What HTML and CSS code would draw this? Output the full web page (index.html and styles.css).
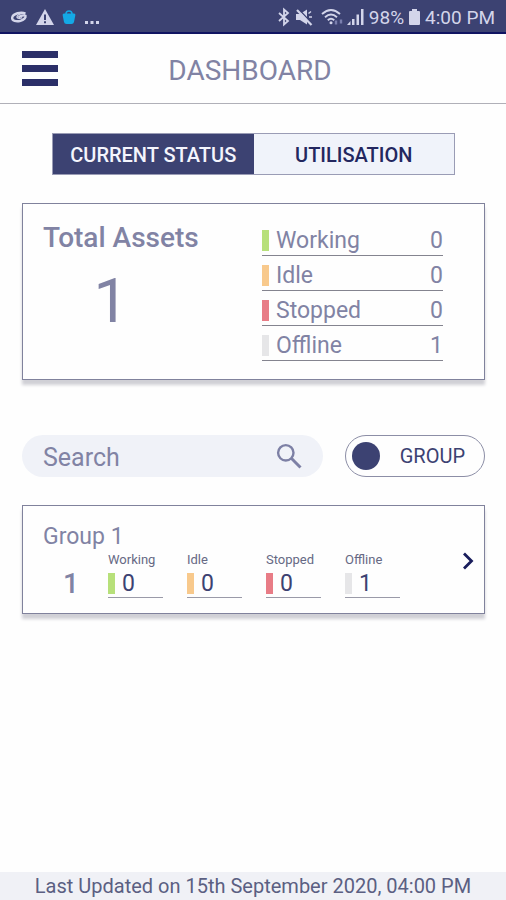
FILE: index.html
```html
<!DOCTYPE html>
<html lang="en">
<head>
<meta charset="utf-8">
<meta name="viewport" content="width=device-width, initial-scale=1">
<title>Dashboard</title>
<link rel="stylesheet" href="styles.css">
</head>
<body>
<div class="statusbar">
  <div class="notices">
    <svg width="18" height="18" viewBox="0 0 18 18" fill="none" stroke="#d3d5ea" aria-hidden="true">
      <path d="M15.500 5.500C11 3.500 3 5.500 2.200 9.500C1.600 13 6.500 14 10.500 12.800C14 11.800 16 9.500 15.500 7.800C14 7 10.500 7.500 8.500 9.500" stroke-width="2.400"/>
      <path d="M15 5.200C10 5 6.500 7.500 7 9.200C7.400 10.500 10 10.600 12.200 9.600" stroke-width="1.400"/>
    </svg>
    <svg width="18" height="18" viewBox="0 0 18 18" aria-hidden="true">
      <path d="M9 1L18 17H0Z" fill="#d3d5ea"/>
      <path d="M8 6.500H10V12H8ZM8 13.300H10V15.300H8Z" fill="#3c4272"/>
    </svg>
    <svg width="14" height="18" viewBox="0 0 14 18" aria-hidden="true">
      <path d="M4 6C4 2 10 2 10 6" fill="none" stroke="#14a9e6" stroke-width="1.500"/>
      <path d="M2 5.500H12Q13.800 5.500 13.300 7.500L12 14Q11.600 16 9.500 16H4.500Q2.400 16 2 14L0.700 7.500Q0.300 5.500 2 5.500Z" fill="#14a9e6"/>
    </svg>
    <svg width="16" height="18" viewBox="0 0 16 18" fill="#d3d5ea" aria-hidden="true">
      <path d="M1 13H4V16H1ZM6.500 13H9.500V16H6.500ZM12 13H15V16H12Z"/>
    </svg>
  </div>
  <div class="system">
    <svg width="14" height="20" viewBox="0 0 14 20" fill="none" stroke="#d3d5ea" stroke-width="1.800" aria-hidden="true">
      <path d="M2 6L11 14L7 17.500V2.500L11 6L2 14"/>
    </svg>
    <svg width="18" height="20" viewBox="0 0 18 20" aria-hidden="true">
      <path d="M1 7H5L12 2.500V17.500L5 13H1Z" fill="#d3d5ea"/>
      <path d="M3.500 2L17 16.500" stroke="#3c4272" stroke-width="1.600"/>
      <path d="M2 3L16.500 18" stroke="#d3d5ea" stroke-width="2.200"/>
      <path d="M13.500 6.500L16 4.500M14 10H17" stroke="#d3d5ea" stroke-width="1.500"/>
    </svg>
    <svg class="wifi" width="22" height="20" viewBox="0 0 22 20" fill="none" stroke="#d3d5ea" stroke-width="1.900" aria-hidden="true">
      <path d="M1 7Q10 -1 19 7M4 10.200Q10 4.800 16 10.200M6.800 13.300Q10 10.300 13.200 13.300"/>
      <circle cx="10" cy="15.800" r="1.500" fill="#d3d5ea" stroke="none"/>
      <path d="M15 13.500V17.500M20 12.500V16.500" stroke="#7a7fae" stroke-width="2.400"/>
    </svg>
    <svg width="18" height="20" viewBox="0 0 18 20" fill="#d3d5ea" aria-hidden="true">
      <path d="M0 18L3.500 14V18ZM5 12H7.500V18H5ZM9.500 7.500H12V18H9.500ZM14 2H16.500V18H14Z"/>
    </svg>
    <span>98%</span>
    <svg width="13" height="20" viewBox="0 0 13 20" fill="#d3d5ea" aria-hidden="true">
      <path d="M4 2H9V4H11Q12 4 12 5V17Q12 18 11 18H2Q1 18 1 17V5Q1 4 2 4H4Z"/>
    </svg>
    <span>4:00 PM</span>
  </div>
</div>
<header class="header">
  <button class="menu" type="button" aria-label="Menu"><i></i><i></i><i></i></button>
  <h1>DASHBOARD</h1>
</header>
<main class="main">
  <div class="tabs">
    <button class="tab active" type="button">CURRENT STATUS</button>
    <button class="tab" type="button">UTILISATION</button>
  </div>
  <section class="card summary">
    <div class="total">
      <h2>Total Assets</h2>
      <p>1</p>
    </div>
    <dl class="states">
      <div class="working"><dt>Working</dt><dd>0</dd></div>
      <div class="idle"><dt>Idle</dt><dd>0</dd></div>
      <div class="stopped"><dt>Stopped</dt><dd>0</dd></div>
      <div class="offline"><dt>Offline</dt><dd>1</dd></div>
    </dl>
  </section>
  <div class="filters">
    <div class="search">
      <input type="text" placeholder="Search" aria-label="Search">
      <svg width="26" height="26" viewBox="0 0 26 26" fill="none" stroke="#7d80a5" aria-hidden="true">
        <circle cx="9.800" cy="9.800" r="7.700" stroke-width="2.400"/>
        <path d="M15.300 15.300L24.500 24.500" stroke-width="3"/>
      </svg>
    </div>
    <label class="toggle"><input type="checkbox"><span>GROUP</span></label>
  </div>
  <section class="card group">
    <div class="group-body">
      <h3>Group 1</h3>
      <div class="group-row">
        <p>1</p>
        <dl class="counts">
          <div class="working"><dt>Working</dt><dd>0</dd></div>
          <div class="idle"><dt>Idle</dt><dd>0</dd></div>
          <div class="stopped"><dt>Stopped</dt><dd>0</dd></div>
          <div class="offline"><dt>Offline</dt><dd>1</dd></div>
        </dl>
      </div>
    </div>
    <button class="open" type="button" aria-label="Open Group 1">
      <svg width="12" height="18" viewBox="0 0 12 18" fill="none" stroke="#191d5c" stroke-width="2.800" aria-hidden="true"><path d="M2 1.500L9.500 9L2 16.500"/></svg>
    </button>
  </section>
</main>
<footer class="footer">Last Updated on 15th September 2020, 04:00 PM</footer>
</body>
</html>
```
FILE: styles.css
```css
* { box-sizing: border-box; }
body, h1, h2, h3, p, dl, dd { margin: 0; }
body {
  min-height: 100vh;
  display: flex;
  flex-direction: column;
  background: #fefefe;
  color: #8183a4;
  font-family: Roboto, "Liberation Sans", sans-serif;
}
button { font: inherit; padding: 0; border: 0; background: none; cursor: pointer; }
svg { display: block; flex: none; }

.statusbar {
  height: 34px;
  padding: 2px 11px 0 10px;
  display: flex;
  align-items: center;
  justify-content: space-between;
  background: #3c4272;
  border-bottom: 2px solid #101462;
  color: #d3d5ea;
  font-size: 19px;
}
.notices, .system { display: flex; align-items: center; }
.notices { gap: 8px; }
.system { gap: 4px; }
.system .wifi { margin-left: 4px; }

.header {
  height: 70px;
  padding: 0 22px;
  display: grid;
  grid-template-columns: 36px 1fr 42px;
  align-items: center;
  border-bottom: 1px solid #b0b0b8;
}
.header h1 {
  text-align: center;
  font-size: 28px;
  line-height: 34px;
  font-weight: 400;
  padding-top: 4px;
}
.menu { display: flex; flex-direction: column; gap: 7px; }
.menu i { height: 7px; width: 36px; background: #2b2f68; }

.main { flex: 1; padding: 29px 21px 0 22px; }
.tabs {
  display: grid;
  grid-template-columns: 1fr 1fr;
  margin: 0 30px 28px;
  border: 1px solid #9a9cb5;
}
.tab {
  height: 40px;
  padding-top: 2px;
  background: #f0f3fa;
  color: #23275f;
  font-size: 20px;
  font-weight: 500;
}
.tab.active { background: #3c4272; color: #f4f5fd; }

.card {
  background: #fefefe;
  border: 1px solid #80829c;
  box-shadow: 0 5px 3px #d0d0d6;
}
.summary {
  display: flex;
  justify-content: space-between;
  padding: 17px 41px 18px 20px;
}
.total { text-align: center; }
.total h2 { font-size: 28px; line-height: 34px; font-weight: 500; }
.total p { font-size: 62px; line-height: 72px; margin: 10px 20px 0 0; }
.states { width: 181px; }
.states div {
  height: 35px;
  padding-top: 4px;
  display: flex;
  align-items: center;
  justify-content: space-between;
  border-bottom: 1px solid #84848f;
  font-size: 23px;
}
.states dt { display: flex; align-items: center; gap: 7px; }
.states dt::before, .counts dd::before {
  content: "";
  width: 7px;
  height: 21px;
  background: var(--state);
}
.working { --state: #b7e07a; }
.idle { --state: #f8c98c; }
.stopped { --state: #e87c86; }
.offline { --state: #e6e6e8; }

.filters { display: flex; gap: 22px; margin: 55px 0 28px; }
.search {
  flex: 1;
  height: 42px;
  min-width: 0;
  display: flex;
  align-items: center;
  padding: 0 21px;
  border-radius: 21px;
  background: #f0f2f8;
}
.search input {
  flex: 1;
  min-width: 0;
  padding: 2px 0 0;
  border: 0;
  outline: 0;
  background: none;
  font: 25px Roboto, "Liberation Sans", sans-serif;
  color: #8183a4;
}
.search input::placeholder { color: #8183a4; opacity: 1; }
.toggle {
  width: 140px;
  height: 42px;
  display: flex;
  align-items: center;
  justify-content: space-between;
  padding: 0 19px 0 6px;
  border: 1px solid #8c8ea6;
  border-radius: 21px;
  color: #3c4272;
  font-size: 20px;
}
.toggle input {
  appearance: none;
  width: 28px;
  height: 28px;
  margin: 0;
  border-radius: 50%;
  background: #3c4272;
}

.group { display: flex; justify-content: space-between; padding: 17px 10px 15px 20px; }
.group h3 { font-size: 23px; line-height: 28px; font-weight: 400; }
.group-row { display: flex; align-items: flex-end; }
.group-row p {
  width: 65px;
  padding-left: 20px;
  font-size: 28px;
  line-height: 28px;
  font-weight: 500;
}
.counts { display: flex; gap: 24px; }
.counts div { width: 55px; }
.counts dt { font-size: 13px; line-height: 17px; color: #666984; white-space: nowrap; }
.counts dd {
  height: 30px;
  padding-top: 2px;
  display: flex;
  align-items: center;
  gap: 7px;
  border-bottom: 1px solid #9a9aa8;
  color: #3c4272;
  font-size: 23px;
}
.open { align-self: center; }

.footer {
  padding: 2px 0;
  background: #f0f1f6;
  color: #5b5f82;
  font-size: 20px;
  line-height: 24px;
  text-align: center;
}
```
